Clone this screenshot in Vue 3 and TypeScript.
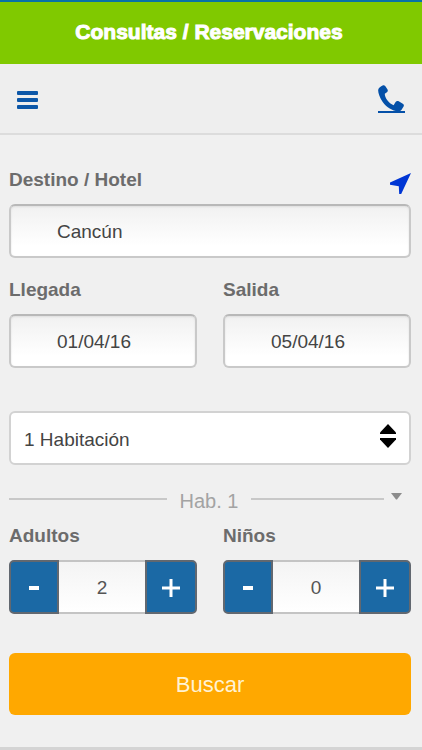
<script setup lang="ts">
import { ref } from 'vue'

const destination = ref('Cancún')
const arrival = ref('01/04/16')
const departure = ref('05/04/16')
const rooms = ref(1)
const expanded = ref(true)

interface Counter {
  id: string
  label: string
  value: number
  min: number
}

const counters = ref<Counter[]>([
  { id: 'adults', label: 'Adultos', value: 2, min: 1 },
  { id: 'children', label: 'Niños', value: 0, min: 0 },
])

function step(counter: Counter, amount: number): void {
  counter.value = Math.max(counter.min, counter.value + amount)
}
</script>

<template>
  <div class="page">
    <header class="title-bar">
      <h1>Consultas / Reservaciones</h1>
    </header>

    <nav class="toolbar">
      <button type="button" class="icon-button" aria-label="Menú">
        <svg width="21" height="18" viewBox="0 0 21 18" fill="#0c57a8">
          <rect x="0" y="0" width="21" height="4" rx="1" />
          <rect x="0" y="7" width="21" height="4" rx="1" />
          <rect x="0" y="14" width="21" height="4" rx="1" />
        </svg>
      </button>
      <a href="#telefono" class="icon-button" aria-label="Teléfono">
        <svg width="28" height="30" viewBox="0 0 28 30" fill="#0450a8">
          <path d="M4.6 .5C5.6 0 6.5 .2 7.2 1.1L9.4 4.3C10.1 5.4 9.9 6.5 8.9 7.3L6.8 8.8C6.6 12.6 10.6 18.3 15.6 20.3L17.6 17C18.4 15.9 19.6 15.7 20.7 16.3L24.8 18.7C26 19.4 26.1 20.4 25.6 21.5L23.4 25C22.6 26 21.5 26.4 19.8 26.3C14.6 25.9 8.6 22.4 4.7 17C1.2 12-.3 6.6 .3 4.4C.6 3.1 2.8 1.3 4.6 .5Z" />
          <rect x="0" y="26" width="27" height="2" />
        </svg>
      </a>
    </nav>

    <form class="search" @submit.prevent>
      <div class="field">
        <div class="label-row">
          <label for="destination">Destino / Hotel</label>
          <button type="button" class="icon-button" aria-label="Usar mi ubicación">
            <svg width="21" height="22" viewBox="0 0 21 22" fill="#0036d4">
              <path d="M21 0L11.2 21H9.2L8.8 13.2L0 11.8V9.6Z" />
            </svg>
          </button>
        </div>
        <input id="destination" v-model="destination" class="box" type="text" />
      </div>

      <div class="pair dates">
        <div class="field">
          <label for="arrival">Llegada</label>
          <input id="arrival" v-model="arrival" class="box" type="text" />
        </div>
        <div class="field">
          <label for="departure">Salida</label>
          <input id="departure" v-model="departure" class="box" type="text" />
        </div>
      </div>

      <div class="select-wrap">
        <select v-model="rooms" class="box" aria-label="Habitaciones">
          <option :value="1">1 Habitación</option>
          <option :value="2">2 Habitaciones</option>
          <option :value="3">3 Habitaciones</option>
        </select>
        <svg class="arrows" width="16" height="24" viewBox="0 0 16 24" fill="#000">
          <path d="M8 0L16 8.6V10H0V8.6Z" />
          <path d="M8 24L16 15.4V14H0V15.4Z" />
        </svg>
      </div>

      <div class="divider">
        <span class="rule"></span>
        <span class="room">Hab. 1</span>
        <div class="divider-end">
          <span class="rule"></span>
          <button type="button" class="icon-button" aria-label="Mostrar habitación" @click="expanded = !expanded">
            <svg width="11" height="7" viewBox="0 0 11 7" fill="#8c8c8c">
              <path d="M0 0H11L6 6.5H5Z" />
            </svg>
          </button>
        </div>
      </div>

      <div v-if="expanded" class="pair">
        <div v-for="counter in counters" :key="counter.id" class="field">
          <label :for="counter.id">{{ counter.label }}</label>
          <div class="stepper">
            <button type="button" aria-label="Restar" @click="step(counter, -1)">
              <svg width="10" height="4" viewBox="0 0 10 4" fill="#fff"><rect width="10" height="4" /></svg>
            </button>
            <input :id="counter.id" v-model.number="counter.value" type="text" inputmode="numeric" />
            <button type="button" aria-label="Sumar" @click="step(counter, 1)">
              <svg width="18" height="18" viewBox="0 0 18 18" fill="#fff">
                <path d="M7.5 0H10.5V7.5H18V10.5H10.5V18H7.5V10.5H0V7.5H7.5Z" />
              </svg>
            </button>
          </div>
        </div>
      </div>

      <button type="submit" class="submit">Buscar</button>
    </form>
  </div>
</template>

<style>
body {
  margin: 0;
  background: #f0f0f0;
}
</style>

<style scoped>
.page {
  box-sizing: border-box;
  min-height: 100vh;
  background: #f0f0f0;
  border-bottom: 3px solid #d4d4d4;
  color: #444;
  font-family: "Liberation Sans", Arial, sans-serif;
  font-size: 19px;
}

.page * {
  box-sizing: border-box;
}

.title-bar {
  padding: 18px 16px 20px 12px;
  border-top: 2px solid #0672a8;
  background: #80c900;
}

h1 {
  margin: 0;
  color: #fff;
  font-size: 21px;
  line-height: 24px;
  text-align: center;
  -webkit-text-stroke: 1px #fff;
}

.toolbar {
  display: flex;
  align-items: center;
  justify-content: space-between;
  height: 71px;
  padding: 3px 16px 0 17px;
  border-bottom: 2px solid #dcdcdc;
  background: #eee;
}

.icon-button {
  display: flex;
  padding: 0;
  border: 0;
  background: none;
  cursor: pointer;
}

.search {
  display: flex;
  flex-direction: column;
  padding: 33px 11px 32px 9px;
}

.field {
  display: flex;
  flex-direction: column;
  gap: 12px;
  min-width: 0;
}

label {
  color: #6c6c6c;
  font-weight: bold;
  line-height: 24px;
}

.label-row {
  display: flex;
  align-items: flex-end;
  justify-content: space-between;
  height: 24px;
}

.label-row .icon-button {
  margin-bottom: -3px;
}

.box {
  width: 100%;
  height: 54px;
  padding: 2px 12px 0 46px;
  border: 2px solid #c9c9c9;
  border-top-color: #b8b8b8;
  border-radius: 6px;
  background: linear-gradient(#f1f1f1, #fff 80%);
  box-shadow: inset 0 1px 2px #ddd;
  color: #444;
  font: inherit;
}

.pair {
  display: grid;
  grid-template-columns: 1fr 1fr;
  gap: 26px;
}

.dates {
  margin-top: 20px;
}

.select-wrap {
  position: relative;
  margin-top: 43px;
}

select.box {
  display: block;
  appearance: none;
  padding-left: 13px;
  border-color: #d2d2d2;
  background: #fff;
  box-shadow: none;
}

.arrows {
  position: absolute;
  top: 13px;
  right: 15px;
  pointer-events: none;
}

.divider {
  display: grid;
  grid-template-columns: 157fr auto 150fr;
  align-items: center;
  gap: 13px;
  margin-top: 24px;
  padding-right: 9px;
  color: #a3a3a3;
  font-size: 20px;
  line-height: 24px;
}

.divider-end {
  display: flex;
  align-items: center;
  gap: 7px;
}

.room {
  white-space: nowrap;
}

.rule {
  flex: 1;
  height: 2px;
  margin-bottom: 4px;
  background: #c8c8c8;
}

.divider .icon-button {
  margin-bottom: 10px;
}

.divider + .pair {
  margin-top: 11px;
}

.stepper {
  display: grid;
  grid-template-columns: 50px 1fr 52px;
  height: 54px;
}

.stepper button {
  display: flex;
  align-items: center;
  justify-content: center;
  padding: 2px 0 0;
  border: 2px solid #626870;
  border-radius: 5px 0 0 5px;
  background: #1b69a5;
  cursor: pointer;
}

.stepper button:last-child {
  border-radius: 0 5px 5px 0;
}

.stepper input {
  width: 100%;
  min-width: 0;
  padding: 2px 0 0;
  border: solid #c4c4c4;
  border-width: 2px 0;
  border-radius: 0;
  background: linear-gradient(#f4f4f4, #fff);
  color: #555;
  font: inherit;
  text-align: center;
}

.submit {
  height: 62px;
  margin-top: 39px;
  padding: 2px 0 0;
  border: 0;
  border-radius: 6px;
  background: #ffa800;
  color: #fff3d4;
  font: inherit;
  font-size: 22px;
  cursor: pointer;
}
</style>
